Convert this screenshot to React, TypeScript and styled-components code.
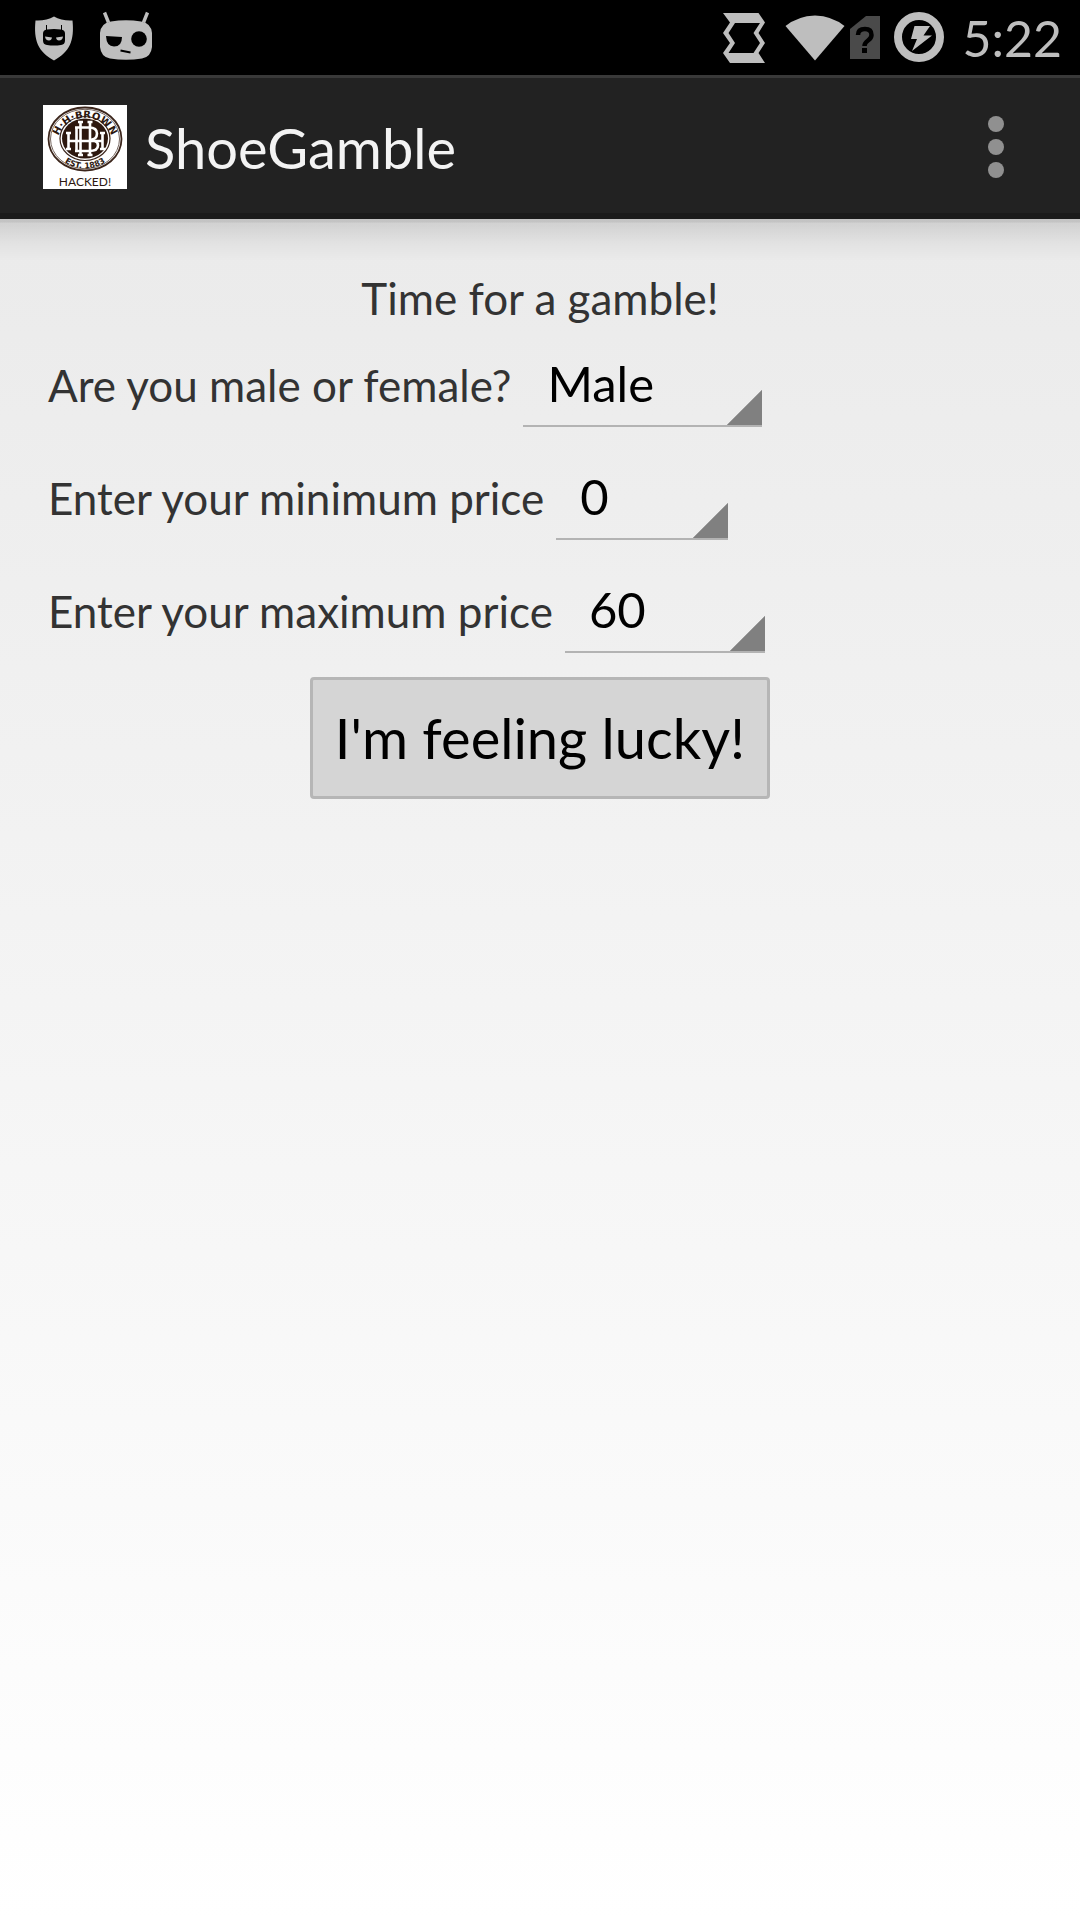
import React from 'react';
import styled, { createGlobalStyle } from 'styled-components';

const GlobalStyle = createGlobalStyle`
  * { box-sizing: border-box; }
  body {
    margin: 0;
    font-family: Lato, "Liberation Sans", sans-serif;
  }
`;

const Page = styled.div`
  min-height: 100vh;
  display: flex;
  flex-direction: column;
  background: linear-gradient(#e8e8e8, #ffffff);
`;

const StatusBar = styled.div`
  display: flex;
  align-items: center;
  justify-content: space-between;
  height: 75px;
  padding: 0 18px 0 32px;
  background: #000;
  color: #bebebe;
`;

const StatusGroup = styled.div<{ $gap: number }>`
  display: flex;
  align-items: center;
  gap: ${(p) => p.$gap}px;
`;

const Clock = styled.time`
  font-size: 50px;
  line-height: 72px;
  padding-left: 13px;
`;

const ActionBar = styled.header`
  display: flex;
  align-items: center;
  height: 144px;
  padding: 3px 24px 0 43px;
  background: #222;
  border-top: 3px solid #393939;
  border-bottom: 6px solid #1b1b1b;
`;

const AppTitle = styled.h1`
  flex: 1;
  margin: 0;
  padding: 2px 0 0 18px;
  font-size: 56px;
  line-height: 66px;
  font-weight: 400;
  color: #f3f3f3;
`;

const MenuButton = styled.button`
  display: flex;
  flex-direction: column;
  align-items: center;
  gap: 7px;
  width: 120px;
  padding: 24px 0;
  border: 0;
  background: none;
`;

const Dot = styled.span`
  width: 16px;
  height: 16px;
  border-radius: 50%;
  background: #909090;
`;

const Content = styled.main`
  flex: 1;
  display: flex;
  flex-direction: column;
  padding: 53px 48px;
  background: linear-gradient(
      rgba(0, 0, 0, 0.17) 0,
      rgba(0, 0, 0, 0.17) 3px,
      rgba(0, 0, 0, 0.11) 4px,
      rgba(0, 0, 0, 0.04) 24px,
      rgba(0, 0, 0, 0) 42px
    ) top / 100% 42px no-repeat;
`;

const Heading = styled.p`
  margin: 0;
  text-align: center;
  font-size: 44px;
  line-height: 52px;
  color: #333;
`;

const Fields = styled.div`
  display: flex;
  flex-direction: column;
  gap: 39px;
  margin: 29px 0 24px;
`;

const Field = styled.div`
  display: flex;
  align-items: baseline;
  gap: 12px;
  height: 74px;
`;

const Label = styled.label`
  font-size: 44px;
  line-height: 52px;
  color: #333;
`;

const Spinner = styled.select<{ $end: number }>`
  appearance: none;
  field-sizing: content;
  height: 74px;
  padding: 0 ${(p) => p.$end}px 12px 24px;
  border: 0;
  border-bottom: 2px solid #b3b3b3;
  border-radius: 0;
  background: linear-gradient(135deg, transparent 50%, #808080 calc(50% + 1px)) right bottom / 36px 36px no-repeat;
  font: 49px/58px Lato, "Liberation Sans", sans-serif;
  color: #000;
`;

const LuckyButton = styled.button`
  align-self: center;
  height: 122px;
  padding: 0 22px;
  border: 3px solid #b6b6b6;
  border-radius: 4px;
  background: #d5d5d5;
  font: 56px/66px Lato, "Liberation Sans", sans-serif;
  color: #000;
`;

const ShieldIcon = () => (
  <svg width="44" height="48" viewBox="0 0 44 48" aria-hidden="true">
    <path d="M22 2.500C17 5.500 10 7 3.500 6.500C1.500 26.500 6 37.500 22 46.500C38 37.500 42.500 26.500 40.500 6.500C34 7 27 5.500 22 2.500Z" fill="#bebebe" />
    <path d="M14.500 11V17.500M29.500 11V17.500" stroke="#000" strokeWidth="1" />
    <path d="M15 15.500Q22 14.500 29 15.500Q33 16 33 19.500V26.500Q33 30.500 29 31Q22 32 15 31Q11 30.500 11 26.500V19.500Q11 16 15 15.500Z" fill="#000" />
    <path d="M13 22.500L20 23.500Q19.500 26.500 17 26.500Q13.500 26.500 13 22.500ZM31 22.500L24 23.500Q24.500 26.500 27 26.500Q30.500 26.500 31 22.500Z" fill="#bebebe" />
  </svg>
);

const RobotIcon = () => (
  <svg width="54" height="54" viewBox="0 0 54 54" aria-hidden="true">
    <path d="M5.500 1.500L9.500 11.500M48.500 1.500L44.500 11.500" stroke="#bebebe" strokeWidth="3.400" />
    <path d="M12 10.500Q27 8 42 10.500Q52 12 53 22V36Q52 46 43 47.500Q27 50 11 47.500Q2 46 1 36V22Q2 12 12 10.500Z" fill="#bebebe" />
    <path d="M7 25L23 26Q23 35.500 15 35.500Q7.500 35.500 7 25Z" fill="#000" />
    <circle cx="40" cy="28" r="7.800" fill="#000" />
    <path d="M21.500 39.500L31.500 41.500" stroke="#000" strokeWidth="1.800" />
  </svg>
);

const RotationIcon = () => (
  <svg width="42" height="52" viewBox="0 0 42 52" aria-hidden="true">
    <path fill="#bebebe" d="M0 1H35.500L42 10.500L35.500 21L42 31L35.500 41L42 51H7L0 41L7 31L0 21L7 10.500Z" />
    <path d="M12 11H37L30.500 21L37 31L30.500 41H5.500L12 31L5.500 21Z" fill="#000" />
  </svg>
);

const WifiIcon = () => (
  <svg width="60" height="48" viewBox="0 0 60 48" aria-hidden="true">
    <path d="M0.500 12Q13 2 30 1.500Q47 2 59.500 12L30 46.500Z" fill="#bebebe" />
  </svg>
);

const SimIcon = () => (
  <svg width="30" height="44" viewBox="0 0 30 44" aria-hidden="true">
    <path d="M16 0H30V43H0V13Z" fill="#4a4a4a" />
    <path d="M8 19Q8 13 15 13Q21.500 13 21.500 19Q21.500 22 18 24.500Q14.500 27 14.500 30" fill="none" stroke="#000" strokeWidth="4.500" />
    <rect x="12" y="32" width="5" height="5" fill="#000" />
  </svg>
);

const ChargeIcon = () => (
  <svg width="50" height="52" viewBox="0 0 50 52" aria-hidden="true">
    <circle cx="25" cy="25" r="21" fill="none" stroke="#bebebe" strokeWidth="8" />
    <path d="M20.500 14H36L29.500 23.500H38L18 39L23 27H17Z" fill="#bebebe" />
  </svg>
);

const Logo = () => (
  <svg width="84" height="84" viewBox="0 0 84 84" role="img" aria-label="H.H. Brown">
    <defs>
      <path id="upperArc" d="M14.500 38A27.500 25 0 1 1 69.500 38" />
      <path id="lowerArc" d="M9 34A33 29.500 0 0 0 75 34" />
    </defs>
    <rect width="84" height="84" fill="#fff" />
    <ellipse cx="42" cy="34" rx="36.500" ry="31.500" fill="none" stroke="#3b251b" strokeWidth="1.800" />
    <ellipse cx="42" cy="34" rx="34.500" ry="29.700" fill="none" stroke="#3b251b" strokeWidth="0.700" />
    <ellipse cx="42" cy="33.500" rx="25" ry="22" fill="none" stroke="#3b251b" strokeWidth="1.200" />
    <ellipse cx="42" cy="33.500" rx="23" ry="20" fill="#2d180f" />
    <g fill="none" stroke="#fff" strokeWidth="2.600">
      <path d="M25.500 28V44M59.500 28V44M23 28H28M23 44H28M57 28H62M57 44H62M25.500 36H59.500" />
      <path d="M37.500 16V51M47 16V51M35 17H40M44.500 17H49.500M35 50H40M44.500 50H49.500" />
      <path d="M32 22.500H46Q54 22.500 54 28.500Q54 35 46 35Q55 35 55 40.500Q55 46 46 46H32M33.500 22.500V46" />
    </g>
    <g fill="#2d180f" textAnchor="middle">
      <text fontSize="10" fontWeight="700" fontFamily="DejaVu Sans, sans-serif">
        <textPath href="#upperArc" startOffset="50%">H·H·BROWN</textPath>
      </text>
      <text fontSize="8" fontWeight="700" fontFamily="DejaVu Sans, sans-serif">
        <textPath href="#lowerArc" startOffset="50%">EST. 1883</textPath>
      </text>
      <text x="42" y="81" fontSize="12" fontFamily="Lato, sans-serif">HACKED!</text>
    </g>
  </svg>
);

type SpinnerFieldProps = { id: string; label: string; value: string; options: string[]; end: number };

const SpinnerField = ({ id, label, value, options, end }: SpinnerFieldProps) => (
  <Field>
    <Label htmlFor={id}>{label}</Label>
    <Spinner id={id} defaultValue={value} $end={end}>
      {options.map((o) => (
        <option key={o}>{o}</option>
      ))}
    </Spinner>
  </Field>
);

const prices = ['0', '20', '40', '60', '80', '100'];

export default function App() {
  return (
    <Page>
      <GlobalStyle />
      <StatusBar>
        <StatusGroup $gap={23}>
          <ShieldIcon />
          <RobotIcon />
        </StatusGroup>
        <StatusGroup $gap={5}>
          <StatusGroup $gap={20}>
            <RotationIcon />
            <WifiIcon />
          </StatusGroup>
          <StatusGroup $gap={14}>
            <SimIcon />
            <ChargeIcon />
          </StatusGroup>
          <Clock>5:22</Clock>
        </StatusGroup>
      </StatusBar>
      <ActionBar>
        <Logo />
        <AppTitle>ShoeGamble</AppTitle>
        <MenuButton aria-label="More options">
          <Dot />
          <Dot />
          <Dot />
        </MenuButton>
      </ActionBar>
      <Content>
        <Heading>Time for a gamble!</Heading>
        <Fields>
          <SpinnerField id="gender" label="Are you male or female?" value="Male" options={['Male', 'Female']} end={108} />
          <SpinnerField id="min" label="Enter your minimum price" value="0" options={prices} end={119} />
          <SpinnerField id="max" label="Enter your maximum price" value="60" options={prices} end={119} />
        </Fields>
        <LuckyButton>I'm feeling lucky!</LuckyButton>
      </Content>
    </Page>
  );
}
